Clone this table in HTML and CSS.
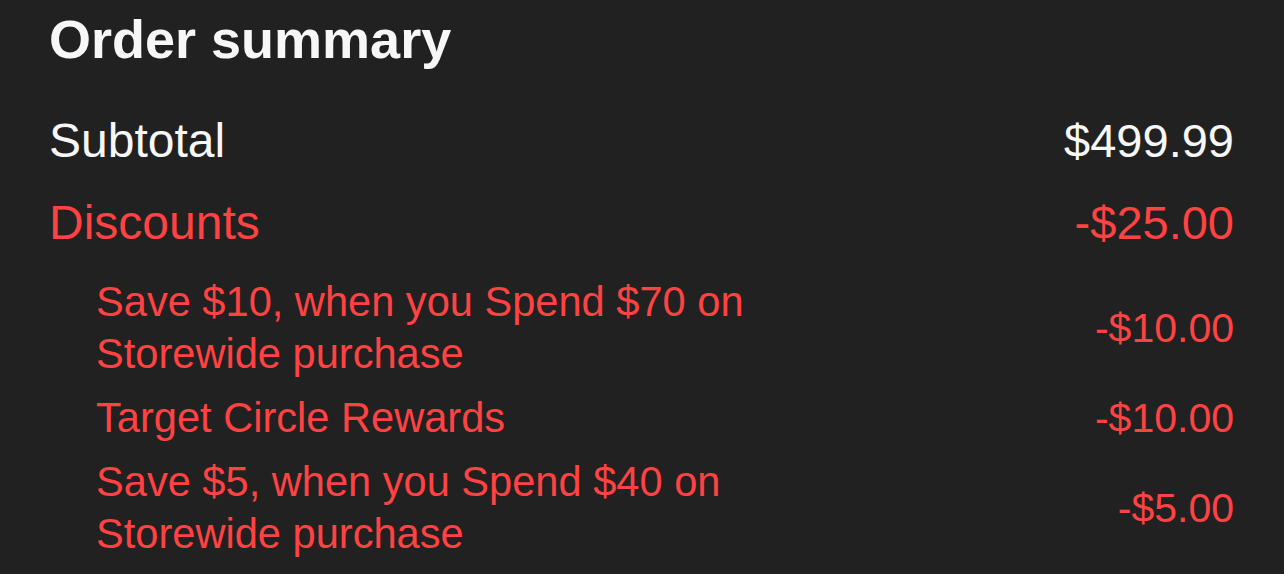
FILE: index.html
```html
<!DOCTYPE html>
<html lang="en">
<head>
<meta charset="utf-8">
<title>Order summary</title>
<link rel="stylesheet" href="styles.css">
</head>
<body>
<main class="summary">
  <h1 class="summary-title">Order summary</h1>
  <div class="row row-main row-subtotal">
    <span class="label">Subtotal</span>
    <span class="amount">$499.99</span>
  </div>
  <div class="row row-main row-discount">
    <span class="label">Discounts</span>
    <span class="amount">-$25.00</span>
  </div>
  <ul class="discount-list">
    <li class="row row-sub">
      <span class="label">Save $10, when you Spend $70 on Storewide purchase</span>
      <span class="amount">-$10.00</span>
    </li>
    <li class="row row-sub">
      <span class="label">Target Circle Rewards</span>
      <span class="amount">-$10.00</span>
    </li>
    <li class="row row-sub">
      <span class="label">Save $5, when you Spend $40 on Storewide purchase</span>
      <span class="amount">-$5.00</span>
    </li>
  </ul>
</main>
</body>
</html>
```
FILE: styles.css
```css
html, body {
  margin: 0;
  padding: 0;
  background: #212121;
}

body {
  font-family: "Liberation Sans", Arial, Helvetica, sans-serif;
  color: #f7f7f7;
  overflow: hidden;
}

.summary {
  padding: 7px 50px 0 49px;
}

.summary-title {
  margin: 0;
  font-size: 54px;
  line-height: 64px;
  font-weight: 700;
  color: #f7f7f7;
}

.row {
  display: flex;
  justify-content: space-between;
  align-items: center;
}

.row-main {
  font-size: 48px;
  line-height: 56px;
}

.row-main .amount {
  font-size: 47px;
}

.row-subtotal {
  margin-top: 42px;
  color: #f7f7f7;
}

.row-discount {
  margin-top: 26px;
  color: #ff4242;
}

.discount-list {
  list-style: none;
  margin: 25px 0 0 0;
  padding: 0 0 0 47px;
  display: flex;
  flex-direction: column;
  gap: 12px;
}

.row-sub {
  font-size: 41.6px;
  line-height: 52px;
  color: #ff4242;
}

.row-sub .amount {
  font-size: 41px;
}

.row-sub .label {
  max-width: 700px;
}

.amount {
  white-space: nowrap;
}
```
